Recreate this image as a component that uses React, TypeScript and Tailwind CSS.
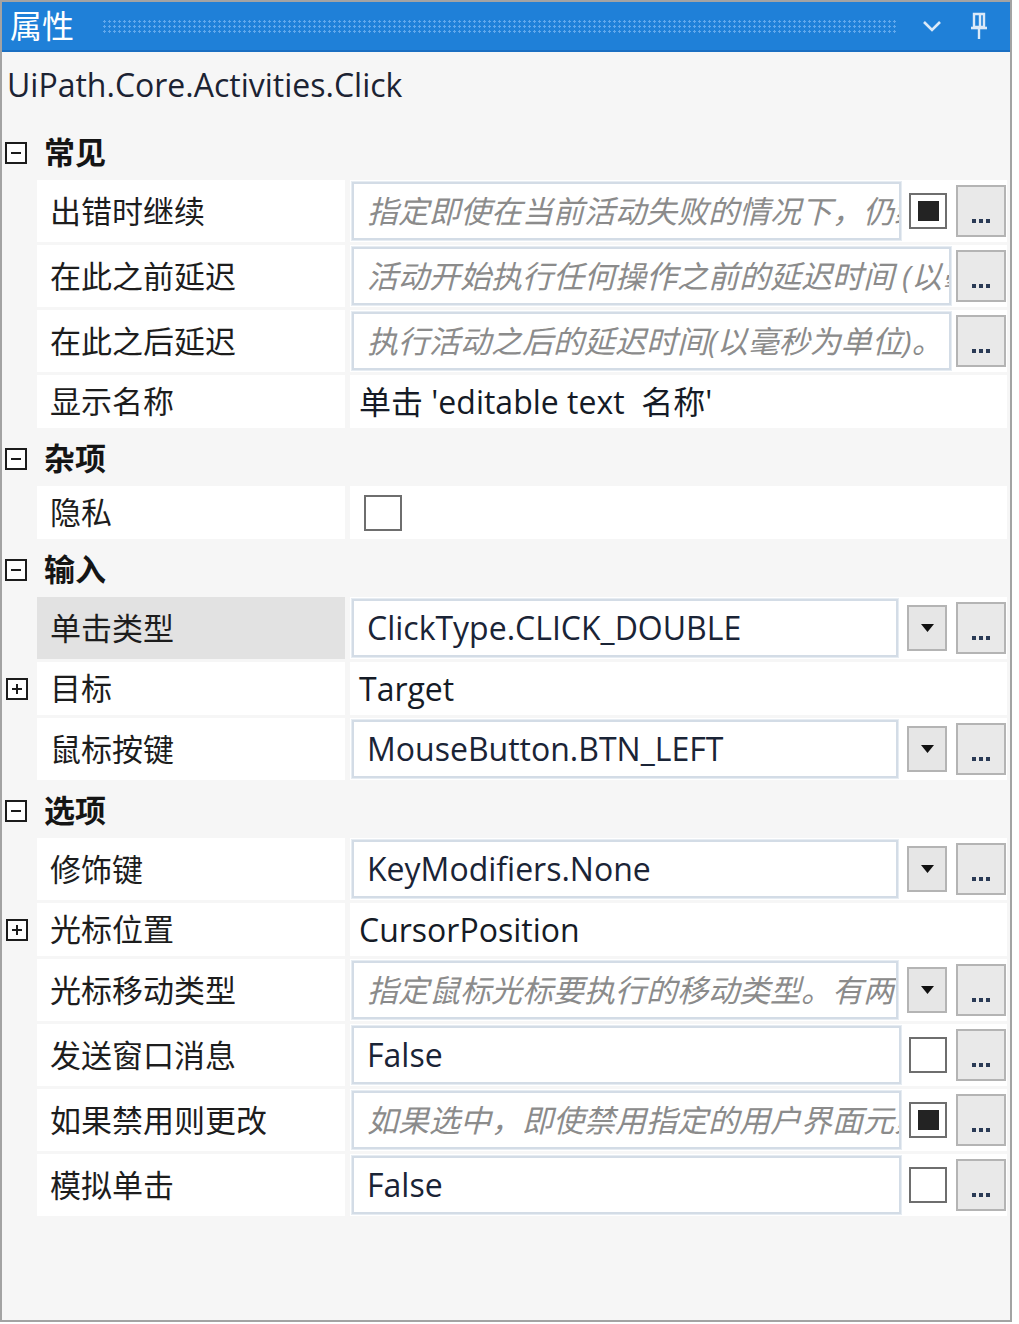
import React from "react";

type Extra = "check" | "checked" | "drop" | null;

type Item =
  | { kind: "cat"; label: string }
  | { kind: "input"; label: string; value: string; hint?: boolean; extra: Extra; selected?: boolean }
  | { kind: "text"; label: string; value: string; expand?: boolean }
  | { kind: "box"; label: string };

const items: Item[] = [
  { kind: "cat", label: "常见" },
  { kind: "input", label: "出错时继续", value: "指定即使在当前活动失败的情况下，仍继续执行其余活动", hint: true, extra: "checked" },
  { kind: "input", label: "在此之前延迟", value: "活动开始执行任何操作之前的延迟时间 (以毫秒为单位)", hint: true, extra: null },
  { kind: "input", label: "在此之后延迟", value: "执行活动之后的延迟时间(以毫秒为单位)。", hint: true, extra: null },
  { kind: "text", label: "显示名称", value: "单击 'editable text  名称'" },
  { kind: "cat", label: "杂项" },
  { kind: "box", label: "隐私" },
  { kind: "cat", label: "输入" },
  { kind: "input", label: "单击类型", value: "ClickType.CLICK_DOUBLE", extra: "drop", selected: true },
  { kind: "text", label: "目标", value: "Target", expand: true },
  { kind: "input", label: "鼠标按键", value: "MouseButton.BTN_LEFT", extra: "drop" },
  { kind: "cat", label: "选项" },
  { kind: "input", label: "修饰键", value: "KeyModifiers.None", extra: "drop" },
  { kind: "text", label: "光标位置", value: "CursorPosition", expand: true },
  { kind: "input", label: "光标移动类型", value: "指定鼠标光标要执行的移动类型。有两种", hint: true, extra: "drop" },
  { kind: "input", label: "发送窗口消息", value: "False", extra: "check" },
  { kind: "input", label: "如果禁用则更改", value: "如果选中，即使禁用指定的用户界面元素", hint: true, extra: "checked" },
  { kind: "input", label: "模拟单击", value: "False", extra: "check" },
];

const font = { fontFamily: '"Open Sans", "Noto Sans CJK SC", sans-serif' };

function Toggle({ open }: { open: boolean }) {
  return (
    <span className="flex h-[22px] w-[22px] items-center justify-center border-2 border-[#1c1c1c] bg-white">
      <span className="relative block h-[2px] w-[10px] bg-[#1c1c1c]">
        {!open && <span className="absolute left-[4px] top-[-4px] block h-[10px] w-[2px] bg-[#1c1c1c]" />}
      </span>
    </span>
  );
}

function CheckBox({ checked }: { checked?: boolean }) {
  return (
    <span className="flex h-[36px] w-[38px] items-center justify-center border-2 border-[#6e6e6e] bg-white">
      {checked && <span className="block h-[20px] w-[21px] bg-[#232323]" />}
    </span>
  );
}

function DotsButton() {
  return (
    <div className="flex h-[52px] w-[50px] items-end justify-center border-2 border-[#b4b4b4] bg-[#e9e9e9] pb-[12px]">
      <span className="flex gap-[3px]">
        <span className="block h-[4px] w-[4px] bg-[#2a3a55]" />
        <span className="block h-[4px] w-[4px] bg-[#2a3a55]" />
        <span className="block h-[4px] w-[4px] bg-[#2a3a55]" />
      </span>
    </div>
  );
}

function DropButton() {
  return (
    <div className="flex h-[46px] w-[40px] items-center justify-center border-2 border-[#b4b4b4] bg-[#e6e6e6]">
      <svg width="13" height="8" viewBox="0 0 13 8">
        <path d="M0 0 H13 L6.5 8 Z" fill="#111" />
      </svg>
    </div>
  );
}

function Row({ item }: { item: Item }) {
  if (item.kind === "cat") {
    return (
      <div className="flex h-[55px] items-center pl-[3px]">
        <Toggle open />
        <span className="ml-[17px] text-[31px] font-bold leading-none text-[#151515]">{item.label}</span>
      </div>
    );
  }

  const tall = item.kind === "input";
  const selected = item.kind === "input" && item.selected;
  const expand = item.kind === "text" && item.expand;

  return (
    <div className={`mb-[3px] flex ${tall ? "h-[62px]" : "h-[53px]"}`}>
      <div className="flex w-[35px] items-center pl-[4px]">{expand && <Toggle open={false} />}</div>
      <div
        className={`flex w-[308px] items-center pl-[13px] text-[31px] leading-none text-[#1d1d1d] ${
          selected ? "bg-[#e2e2e2]" : "bg-white"
        }`}
      >
        {item.label}
      </div>
      <div className="ml-[5px] flex w-[657px] items-center bg-white">
        {item.kind === "text" && (
          <span className="ml-[9px] whitespace-pre text-[32px] leading-none text-[#151b26]">{item.value}</span>
        )}
        {item.kind === "box" && (
          <span className="ml-[14px]">
            <CheckBox />
          </span>
        )}
        {item.kind === "input" && (
          <div className="flex h-full w-full items-center pl-[2px] pr-[1px]">
            <div className="flex h-[58px] min-w-0 flex-1 items-center overflow-hidden border-2 border-[#d3dce6] bg-white pl-[13px] shadow-[0_0_0_1px_#e6ecf2]">
              <span
                className={`whitespace-nowrap leading-none ${
                  item.hint ? "text-[31px] italic text-[#8b8b8b]" : "text-[32px] text-[#1a2436]"
                }`}
              >
                {item.value}
              </span>
            </div>
            {item.extra === "drop" && (
              <span className="ml-[9px]">
                <DropButton />
              </span>
            )}
            {(item.extra === "check" || item.extra === "checked") && (
              <span className="ml-[8px]">
                <CheckBox checked={item.extra === "checked"} />
              </span>
            )}
            <span className={item.extra ? "ml-[9px]" : "ml-[5px]"}>
              <DotsButton />
            </span>
          </div>
        )}
      </div>
    </div>
  );
}

export default function App() {
  return (
    <div className="h-[1324px] w-[1019px] bg-white" style={font}>
      <div className="flex h-[1322px] w-[1012px] flex-col border-2 border-[#a3a3a3] bg-[#f6f6f6]">
        <div className="flex h-[50px] items-center border-b-2 border-[#1a6fc2] bg-[#1f80d8] pl-[8px] pr-[22px]">
          <span className="text-[32px] leading-none text-white">属性</span>
          <div className="ml-[28px] h-[15px] flex-1 bg-[radial-gradient(circle,#62a8ec_1.1px,transparent_1.4px)] bg-[length:5px_5px]" />
          <svg className="ml-[24px]" width="20" height="14" viewBox="0 0 20 14">
            <path d="M2 3 L10 11 L18 3" fill="none" stroke="#dbe9f8" strokeWidth="2.6" />
          </svg>
          <svg className="ml-[28px]" width="18" height="28" viewBox="0 0 18 28">
            <path d="M4 2 H14 V15 H4 Z M10 3 V14" fill="none" stroke="#dbe9f8" strokeWidth="2.4" />
            <path d="M1 16 H17" stroke="#dbe9f8" strokeWidth="2.6" />
            <path d="M9 16 V27" stroke="#dbe9f8" strokeWidth="2.4" />
          </svg>
        </div>
        <div className="flex h-[73px] items-center pb-[7px] pl-[5px] text-[32px] leading-none text-[#1c2333]">
          UiPath.Core.Activities.Click
        </div>
        <div className="flex flex-col">
          {items.map((it, i) => (
            <Row key={i} item={it} />
          ))}
        </div>
      </div>
    </div>
  );
}
